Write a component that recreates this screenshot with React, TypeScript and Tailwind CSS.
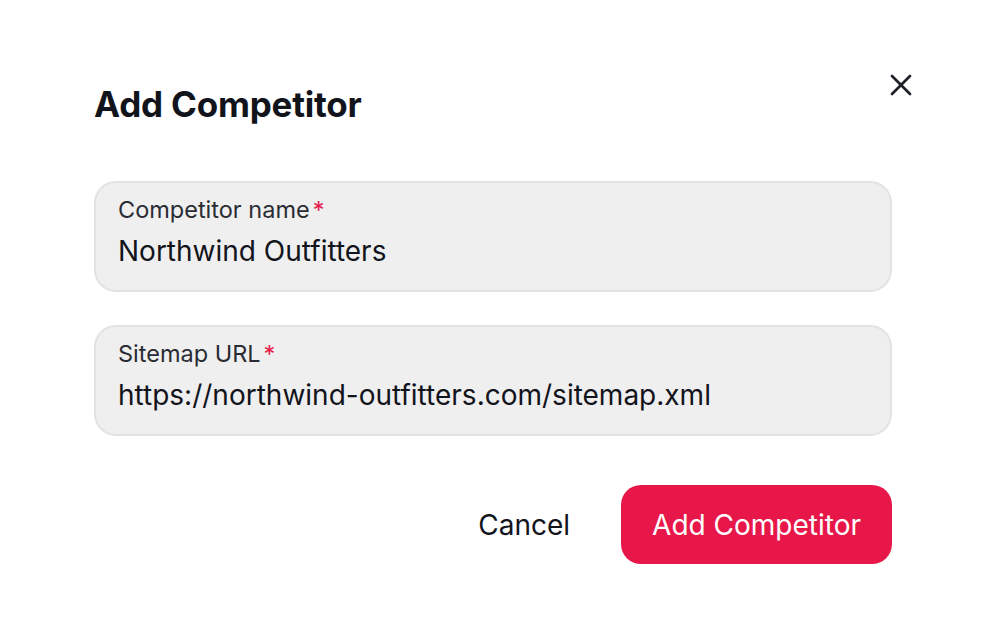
import { X } from 'lucide-react';

const Field = ({ label, value }: { label: string; value: string }) => (
  <div className="flex h-[111px] flex-col rounded-[22px] border-2 border-[#e2e2e2] bg-[#efefef] px-[22px] pt-[12px]">
    <div className="flex items-start text-[23.5px] leading-[30px] text-[#2a2c33]">
      {label}
      <span className="ml-[3px] text-[#e8174a]">*</span>
    </div>
    <div className="mt-[8px] text-[28px] leading-[36px] text-[#12141c]">{value}</div>
  </div>
);

export default function App() {
  return (
    <div className="flex h-[642px] w-[986px] flex-col bg-white px-[94px] font-['Inter',sans-serif]">
      {/* Header */}
      <div className="relative pt-[82px]">
        <h1 className="text-[35px] font-bold leading-[44px] tracking-[-0.2px] text-[#12141c]">Add Competitor</h1>
        <button className="absolute right-[-31px] top-[63px] p-1 text-[#1f2128]" aria-label="Close">
          <X size={36} strokeWidth={1.8} />
        </button>
      </div>

      {/* Fields */}
      <div className="mt-[55px] flex flex-col gap-[33px]">
        <Field label="Competitor name" value="Northwind Outfitters" />
        <Field label="Sitemap URL" value="https://northwind-outfitters.com/sitemap.xml" />
      </div>

      {/* Actions */}
      <div className="mt-[49px] flex items-center justify-end gap-[51px]">
        <button className="text-[28px] text-[#12141c]">Cancel</button>
        <button className="h-[79px] rounded-[20px] bg-[#e8174a] px-[31px] text-[28px] text-white">Add Competitor</button>
      </div>
    </div>
  );
}
